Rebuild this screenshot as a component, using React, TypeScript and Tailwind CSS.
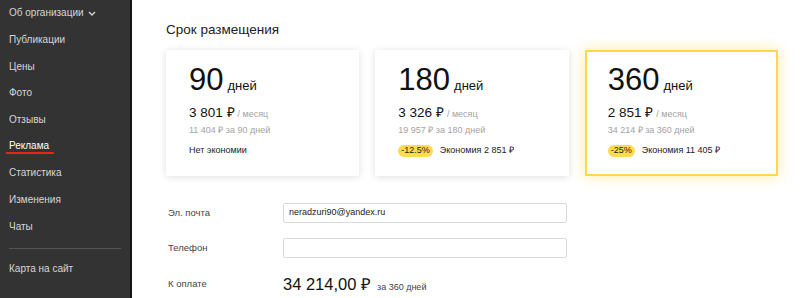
import { ReactNode } from "react";

const navItems = [
  "Публикации",
  "Цены",
  "Фото",
  "Отзывы",
  "Реклама",
  "Статистика",
  "Изменения",
  "Чаты",
];

interface Plan {
  days: string;
  monthly: string;
  total: string;
  badge?: string;
  saving: string;
  active?: boolean;
}

const plans: Plan[] = [
  { days: "90", monthly: "3 801 ₽", total: "11 404 ₽ за 90 дней", saving: "Нет экономии" },
  { days: "180", monthly: "3 326 ₽", total: "19 957 ₽ за 180 дней", badge: "-12.5%", saving: "Экономия 2 851 ₽" },
  { days: "360", monthly: "2 851 ₽", total: "34 214 ₽ за 360 дней", badge: "-25%", saving: "Экономия 11 405 ₽", active: true },
];

function NavItem({ children }: { children: ReactNode }) {
  return <div className="h-[26.67px] flex items-center pl-[9px] text-[10px] leading-[12px] text-[#d6d6d6]">{children}</div>;
}

function PlanCard({ plan }: { plan: Plan }) {
  return (
    <div
      className={
        plan.active
          ? "bg-white border-2 border-[#ffd84a] pl-[21px] pt-[12px] h-[126px] shadow-[0_0_14px_rgba(255,210,40,0.45)]"
          : "bg-white pl-[23px] pt-[14px] h-[126px] shadow-[0_1px_7px_rgba(0,0,0,0.13)]"
      }
    >
      <div className="flex items-baseline gap-[4px] text-[#111] leading-none">
        <span className="text-[31px]">{plan.days}</span>
        <span className="text-[13px]">дней</span>
      </div>
      <div className="flex items-baseline gap-[3px] mt-[11px] leading-none">
        <span className="text-[13.5px] text-[#111]">{plan.monthly}</span>
        <span className="text-[9px] text-[#a3a3a3]">/ месяц</span>
      </div>
      <div className="text-[9px] leading-none text-[#a3a3a3] mt-[6px]">{plan.total}</div>
      <div className="flex items-center gap-[7px] mt-[10px] h-[12px] text-[9px] leading-none text-[#222]">
        {plan.badge && (
          <span className="bg-[#ffdb4d] rounded-full h-[12px] px-[3px] flex items-center">{plan.badge}</span>
        )}
        <span>{plan.saving}</span>
      </div>
    </div>
  );
}

export default function App() {
  return (
    <div className="flex w-[800px] h-[298px] overflow-hidden bg-white" style={{ fontFamily: '"Liberation Sans", Arial, sans-serif' }}>
      <aside className="w-[132px] shrink-0 bg-[#333333] border-r-2 border-[#141414]">
        <NavItem>
          <span>Об организации</span>
          <svg className="ml-[4px] mt-[1px]" width="8" height="5" viewBox="0 0 8 5" fill="none">
            <path d="M1 1l3 3 3-3" stroke="#d6d6d6" strokeWidth="1.4" />
          </svg>
        </NavItem>
        {navItems.map((item) =>
          item === "Реклама" ? (
            <NavItem key={item}>
              <span className="inline-block text-white -ml-[3px] pl-[3px] pr-[5px] border-b-2 border-[#e5261a]">{item}</span>
            </NavItem>
          ) : (
            <NavItem key={item}>{item}</NavItem>
          )
        )}
        <div className="mx-[9px] mt-[8px] mb-[7px] h-px bg-[#555]" />
        <NavItem>Карта на сайт</NavItem>
      </aside>

      <main className="flex-1 pl-[34px] pt-[20px]">
        <h1 className="text-[13.5px] leading-[20px] text-[#222]">Срок размещения</h1>
        <div className="grid grid-cols-3 gap-4 w-[612px] mt-[10px]">
          {plans.map((p) => (
            <PlanCard key={p.days} plan={p} />
          ))}
        </div>

        <div className="grid grid-cols-[117px_284px] items-center gap-y-[15px] mt-[27px] text-[9.5px] text-[#444]">
          <span className="pl-[2px]">Эл. почта</span>
          <div className="h-[20px] border border-[#d9d9d9] rounded-[2px] flex items-center pl-[5px] text-[9px] text-[#222]">neradzuri90@yandex.ru</div>
          <span className="pl-[2px]">Телефон</span>
          <div className="h-[20px] border border-[#d9d9d9] rounded-[2px]" />
          <span className="pl-[2px] mt-[3px]">К оплате</span>
          <div className="flex items-baseline gap-[6px] mt-[3px] leading-none">
            <span className="text-[16.5px] text-[#111]">34 214,00 ₽</span>
            <span className="text-[9px] text-[#444]">за 360 дней</span>
          </div>
        </div>
      </main>
    </div>
  );
}
